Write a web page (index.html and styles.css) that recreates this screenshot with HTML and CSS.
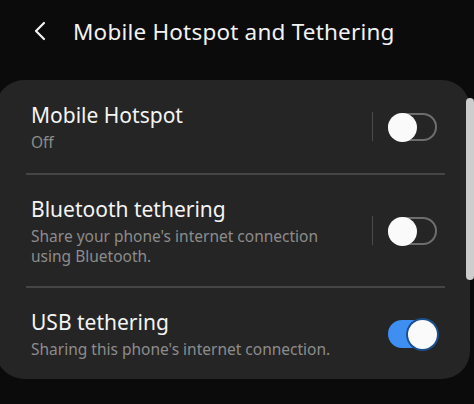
FILE: index.html
```html
<!DOCTYPE html>
<html lang="en">
<head>
  <meta charset="UTF-8" />
  <meta name="viewport" content="width=device-width, initial-scale=1.0" />
  <title>Mobile Hotspot and Tethering</title>
  <link rel="stylesheet" href="styles.css">
</head>
<body>
  <header class="topbar">
    <svg class="back" width="14" height="20" viewBox="0 0 14 20">
      <path d="M11 2 L3 10 L11 18" fill="none" stroke="#f2f2f2" stroke-width="2.2" stroke-linecap="round" stroke-linejoin="round"/>
    </svg>
    <h1 class="title">Mobile Hotspot and Tethering</h1>
  </header>

  <div class="card">
    <div class="row row-first">
      <div class="text">
        <div class="label">Mobile Hotspot</div>
        <div class="sub">Off</div>
      </div>
      <span class="sep"></span>
      <span class="switch"></span>
    </div>
    <div class="divider"></div>
    <div class="row row-mid">
      <div class="text">
        <div class="label">Bluetooth tethering</div>
        <div class="sub">Share your phone's internet connection<br>using Bluetooth.</div>
      </div>
      <span class="sep"></span>
      <span class="switch"></span>
    </div>
    <div class="divider"></div>
    <div class="row row-last">
      <div class="text">
        <div class="label">USB tethering</div>
        <div class="sub">Sharing this phone's internet connection.</div>
      </div>
      <span class="switch on"></span>
    </div>
  </div>

  <div class="scrollbar"></div>
</body>
</html>
```

FILE: styles.css
```css
body {
  margin: 0;
  width: 474px;
  height: 404px;
  overflow: hidden;
  background: #0b0b0b;
  font-family: "Noto Sans", "Open Sans", sans-serif;
  color: #f2f2f2;
  position: relative;
}
.topbar {
  display: flex;
  align-items: center;
  padding-left: 33px;
  margin-top: -18px;
  height: 98px;
  box-sizing: border-box;
}
.back {
  display: block;
}
.title {
  margin: 0 0 0 26px;
  font-size: 22.5px;
  font-weight: 400;
  letter-spacing: 0.2px;
}
.card {
  margin-left: -4px;
  width: 474px;
  background: #252525;
  border-radius: 28px;
}
.row {
  display: flex;
  align-items: center;
  padding: 0 33px 0 35px;
  box-sizing: border-box;
}
.row-first {
  height: 93px;
}
.row-mid {
  height: 111px;
}
.row-last {
  height: 91px;
}
.text {
  flex: 1;
}
.label {
  font-size: 21px;
  line-height: 28px;
  color: #f4f4f4;
}
.sub {
  font-size: 15.5px;
  line-height: 20px;
  margin-top: 3px;
  color: #8c8c8c;
}
.divider {
  height: 2px;
  background: #454545;
  margin: 0 25px 0 30px;
}
.sep {
  width: 1px;
  height: 29px;
  background: #4a4a4a;
  margin-right: 15px;
}
.switch {
  position: relative;
  width: 49px;
  height: 28px;
  border: 2px solid #6e6e6e;
  border-radius: 16px;
  box-sizing: border-box;
}
.switch:before {
  content: "";
  position: absolute;
  left: -2px;
  top: -2px;
  width: 29px;
  height: 29px;
  border-radius: 50%;
  background: #fafafa;
}
.switch.on {
  background: #3f8ef2;
  border-color: #3f8ef2;
}
.switch.on:before {
  left: auto;
  right: -2px;
  box-shadow: 0 0 0 2px #1c4f8a;
}
.scrollbar {
  position: absolute;
  left: 466px;
  top: 98px;
  width: 8px;
  height: 182px;
  background: #cdcdcd;
  border-radius: 4px;
}
```
